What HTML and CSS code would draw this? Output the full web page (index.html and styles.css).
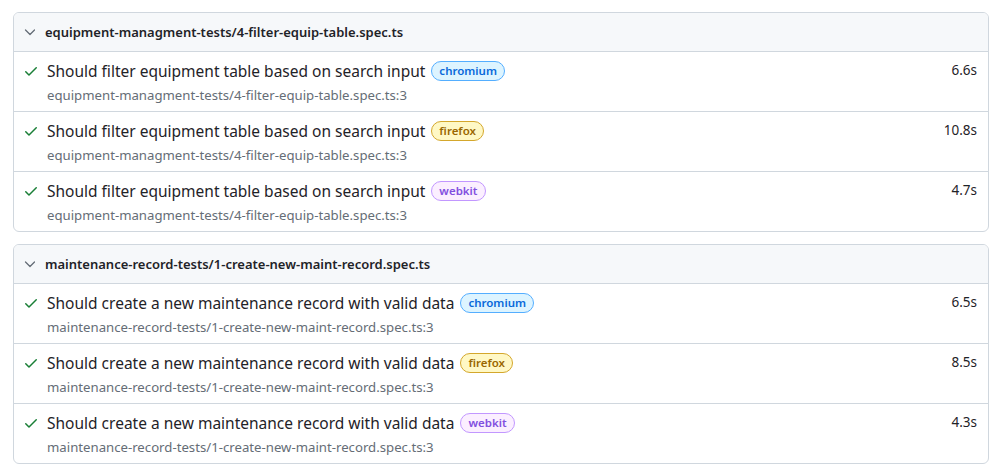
FILE: index.html
```html
<!DOCTYPE html>
<html>
<head>
<meta charset="utf-8">
<link rel="stylesheet" href="styles.css">
</head>
<body>
<div class="report">
  <div class="chip">
    <div class="chip-header">
      <svg class="chevron" viewBox="0 0 16 16" width="16" height="16"><polyline points="3.5,6 8,10.5 12.5,6"/></svg>
      <span>equipment-managment-tests/4-filter-equip-table.spec.ts</span>
    </div>
    <div class="test">
      <div class="test-main">
        <div class="test-line">
          <svg class="check" viewBox="0 0 16 16" width="16" height="16"><path d="M13.78 4.22a.75.75 0 0 1 0 1.06l-7.25 7.25a.75.75 0 0 1-1.06 0L2.22 9.28a.751.751 0 0 1 .018-1.042.751.751 0 0 1 1.042-.018L6 10.94l6.72-6.720a.75.75 0 0 1 1.06 0Z"/></svg>
          <span class="title">Should filter equipment table based on search input</span>
          <span class="label chromium">chromium</span>
        </div>
        <div class="location">equipment-managment-tests/4-filter-equip-table.spec.ts:3</div>
      </div>
      <div class="duration">6.6s</div>
    </div>
    <div class="test">
      <div class="test-main">
        <div class="test-line">
          <svg class="check" viewBox="0 0 16 16" width="16" height="16"><path d="M13.78 4.22a.75.75 0 0 1 0 1.06l-7.25 7.25a.75.75 0 0 1-1.06 0L2.22 9.28a.751.751 0 0 1 .018-1.042.751.751 0 0 1 1.042-.018L6 10.94l6.72-6.72a.75.75 0 0 1 1.06 0Z"/></svg>
          <span class="title">Should filter equipment table based on search input</span>
          <span class="label firefox">firefox</span>
        </div>
        <div class="location">equipment-managment-tests/4-filter-equip-table.spec.ts:3</div>
      </div>
      <div class="duration">10.8s</div>
    </div>
    <div class="test">
      <div class="test-main">
        <div class="test-line">
          <svg class="check" viewBox="0 0 16 16" width="16" height="16"><path d="M13.78 4.22a.75.75 0 0 1 0 1.06l-7.25 7.25a.75.75 0 0 1-1.06 0L2.22 9.28a.751.751 0 0 1 .018-1.042.751.751 0 0 1 1.042-.018L6 10.94l6.72-6.72a.75.75 0 0 1 1.06 0Z"/></svg>
          <span class="title">Should filter equipment table based on search input</span>
          <span class="label webkit">webkit</span>
        </div>
        <div class="location">equipment-managment-tests/4-filter-equip-table.spec.ts:3</div>
      </div>
      <div class="duration">4.7s</div>
    </div>
  </div>

  <div class="chip">
    <div class="chip-header">
      <svg class="chevron" viewBox="0 0 16 16" width="16" height="16"><polyline points="3.5,6 8,10.5 12.5,6"/></svg>
      <span>maintenance-record-tests/1-create-new-maint-record.spec.ts</span>
    </div>
    <div class="test">
      <div class="test-main">
        <div class="test-line">
          <svg class="check" viewBox="0 0 16 16" width="16" height="16"><path d="M13.78 4.22a.75.75 0 0 1 0 1.06l-7.25 7.25a.75.75 0 0 1-1.06 0L2.22 9.28a.751.751 0 0 1 .018-1.042.751.751 0 0 1 1.042-.018L6 10.94l6.72-6.72a.75.75 0 0 1 1.06 0Z"/></svg>
          <span class="title">Should create a new maintenance record with valid data</span>
          <span class="label chromium">chromium</span>
        </div>
        <div class="location">maintenance-record-tests/1-create-new-maint-record.spec.ts:3</div>
      </div>
      <div class="duration">6.5s</div>
    </div>
    <div class="test">
      <div class="test-main">
        <div class="test-line">
          <svg class="check" viewBox="0 0 16 16" width="16" height="16"><path d="M13.78 4.22a.75.75 0 0 1 0 1.06l-7.25 7.25a.75.75 0 0 1-1.06 0L2.22 9.28a.751.751 0 0 1 .018-1.042.751.751 0 0 1 1.042-.018L6 10.94l6.72-6.72a.75.75 0 0 1 1.06 0Z"/></svg>
          <span class="title">Should create a new maintenance record with valid data</span>
          <span class="label firefox">firefox</span>
        </div>
        <div class="location">maintenance-record-tests/1-create-new-maint-record.spec.ts:3</div>
      </div>
      <div class="duration">8.5s</div>
    </div>
    <div class="test">
      <div class="test-main">
        <div class="test-line">
          <svg class="check" viewBox="0 0 16 16" width="16" height="16"><path d="M13.78 4.22a.75.75 0 0 1 0 1.06l-7.25 7.25a.75.75 0 0 1-1.06 0L2.22 9.28a.751.751 0 0 1 .018-1.042.751.751 0 0 1 1.042-.018L6 10.94l6.72-6.72a.75.75 0 0 1 1.06 0Z"/></svg>
          <span class="title">Should create a new maintenance record with valid data</span>
          <span class="label webkit">webkit</span>
        </div>
        <div class="location">maintenance-record-tests/1-create-new-maint-record.spec.ts:3</div>
      </div>
      <div class="duration">4.3s</div>
    </div>
  </div>
</div>
</body>
</html>
```

FILE: styles.css
```css
* { box-sizing: border-box; }
html, body { margin: 0; padding: 0; background: #ffffff; }
body {
  font-family: "Noto Sans", "Open Sans", sans-serif;
  color: #1f2328;
}
.report {
  padding: 12px 5px 0 13px;
  display: flex;
  flex-direction: column;
  gap: 12px;
}
.chip {
  border: 1px solid #d0d7de;
  border-radius: 6px;
  overflow: hidden;
}
.chip-header {
  height: 39px;
  display: flex;
  align-items: center;
  gap: 7px;
  padding: 0 0 1px 8px;
  background: #f6f8fa;
  border-bottom: 1px solid #d0d7de;
  font-size: 13px;
  font-weight: 600;
  color: #1f2328;
}
.chevron {
  flex: none;
  fill: none;
  stroke: #656d76;
  stroke-width: 1.3;
  stroke-linecap: round;
  stroke-linejoin: round;
}
.test {
  display: flex;
  justify-content: space-between;
  padding: 7px 11px 0 9px;
  height: 60px;
  border-bottom: 1px solid #d0d7de;
}
.test:last-child { border-bottom: none; height: 59px; }
.test-main { display: flex; flex-direction: column; }
.test-line {
  display: flex;
  align-items: center;
  height: 24px;
}
.check { fill: #1a7f37; flex: none; margin-right: 8px; }
.title { font-size: 15.5px; font-weight: 400; color: #1f2328; }
.label {
  margin-left: 6px;
  font-size: 11.5px;
  font-weight: 600;
  line-height: 18px;
  padding: 0 7px;
  border-radius: 2em;
  border: 1px solid;
}
.chromium { background: #ddf4ff; border-color: #54aeff; color: #0969da; }
.firefox { background: #fff8c5; border-color: #d4a72c; color: #9a6700; }
.webkit { background: #fbefff; border-color: #c297ff; color: #8250df; }
.location {
  margin-left: 24px;
  margin-top: 3px;
  font-size: 13.2px;
  color: #656d76;
}
.duration {
  font-size: 13.5px;
  color: #1f2328;
  line-height: 23px;
}
```
